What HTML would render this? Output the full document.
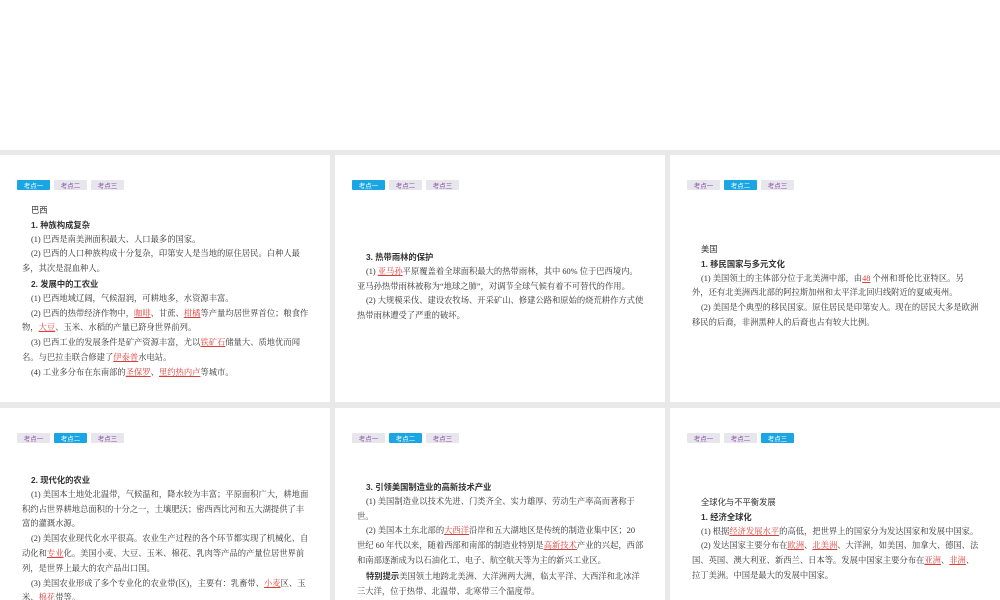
<!DOCTYPE html><html><head><meta charset="utf-8"><style>
body{margin:0;width:1000px;height:600px;background:#e9e9e9;position:relative;overflow:hidden;font-family:"Liberation Serif","Noto Serif CJK SC",serif;color:#333}
.top{position:absolute;left:0;top:0;width:1000px;height:150px;background:#fff}
.p{position:absolute;background:#fff;width:330px;overflow:hidden}
.tabs{position:absolute;top:25px;left:17px;display:flex;gap:4px}
.tabs span{width:33px;height:10px;background:#e6e6ec;color:#8a4fa5;font:6.5px "Noto Sans CJK SC",sans-serif;text-align:center;line-height:10px;border-radius:1px}
.tabs span.a{background:#1aa6e4;color:#fff}
.t{position:absolute;left:22px;width:288px;font-size:8.3px;line-height:14.8px}
.t p{margin:0;text-indent:9px}
.h{font-family:"Liberation Sans","Noto Sans CJK SC",sans-serif;font-weight:bold}
.hh{font-family:"Liberation Sans","Noto Sans CJK SC",sans-serif}
u{color:#d8403a;text-decoration-color:#d8403a}
</style></head><body>
<div class="top"></div>
<div class="p" style="left:0;top:155px;height:247px">
<div class="tabs"><span class="a">考点一</span><span>考点二</span><span>考点三</span></div>
<div class="t" style="top:48px">
<p class="hh">巴西</p><p class="h">1. 种族构成复杂</p>
<p>(1) 巴西是南美洲面积最大、人口最多的国家。</p>
<p>(2) 巴西的人口种族构成十分复杂，印第安人是当地的原住居民。白种人最多，其次是混血种人。</p>
<p class="h">2. 发展中的工农业</p>
<p>(1) 巴西地域辽阔，气候湿润，可耕地多，水资源丰富。</p>
<p>(2) 巴西的热带经济作物中，<u>咖啡</u>、甘蔗、<u>柑橘</u>等产量均居世界首位；粮食作物，<u>大豆</u>、玉米、水稻的产量已跻身世界前列。</p>
<p>(3) 巴西工业的发展条件是矿产资源丰富，尤以<u>铁矿石</u>储量大、质地优而闻名。与巴拉圭联合修建了<u>伊泰普</u>水电站。</p>
<p>(4) 工业多分布在东南部的<u>圣保罗</u>、<u>里约热内卢</u>等城市。</p>
</div></div>
<div class="p" style="left:335px;top:155px;height:247px">
<div class="tabs"><span class="a">考点一</span><span>考点二</span><span>考点三</span></div>
<div class="t" style="top:95px;left:22px">
<p class="h">3. 热带雨林的保护</p>
<p>(1) <u>亚马孙</u>平原覆盖着全球面积最大的热带雨林，其中 60% 位于巴西境内。亚马孙热带雨林被称为“地球之肺”，对调节全球气候有着不可替代的作用。</p>
<p>(2) 大规模采伐、建设农牧场、开采矿山、修建公路和原始的烧荒耕作方式使热带雨林遭受了严重的破坏。</p>
</div></div>
<div class="p" style="left:670px;top:155px;height:247px">
<div class="tabs"><span>考点一</span><span class="a">考点二</span><span>考点三</span></div>
<div class="t" style="top:87px;left:22px">
<p class="hh">美国</p><p class="h">1. 移民国家与多元文化</p>
<p>(1) 美国领土的主体部分位于北美洲中部，由<u>48</u> 个州和哥伦比亚特区。另外，还有北美洲西北部的阿拉斯加州和太平洋北回归线附近的夏威夷州。</p>
<p>(2) 美国是个典型的移民国家。原住居民是印第安人。现在的居民大多是欧洲移民的后裔，非洲黑种人的后裔也占有较大比例。</p>
</div></div>
<div class="p" style="left:0;top:408px;height:192px">
<div class="tabs"><span>考点一</span><span class="a">考点二</span><span>考点三</span></div>
<div class="t" style="top:65px">
<p class="h">2. 现代化的农业</p>
<p>(1) 美国本土地处北温带，气候温和，降水较为丰富；平原面积广大，耕地面积约占世界耕地总面积的十分之一，土壤肥沃；密西西比河和五大湖提供了丰富的灌溉水源。</p>
<p>(2) 美国农业现代化水平很高。农业生产过程的各个环节都实现了机械化、自动化和<u>专业</u>化。美国小麦、大豆、玉米、棉花、乳肉等产品的产量位居世界前列，是世界上最大的农产品出口国。</p>
<p>(3) 美国农业形成了多个专业化的农业带(区)，主要有：乳畜带、<u>小麦</u>区、玉米、<u>棉花</u>带等。</p>
</div></div>
<div class="p" style="left:335px;top:408px;height:192px">
<div class="tabs"><span>考点一</span><span class="a">考点二</span><span>考点三</span></div>
<div class="t" style="top:72px">
<p class="h">3. 引领美国制造业的高新技术产业</p>
<p>(1) 美国制造业以技术先进、门类齐全、实力雄厚、劳动生产率高而著称于世。</p>
<p>(2) 美国本土东北部的<u>大西洋</u>沿岸和五大湖地区是传统的制造业集中区；20 世纪 60 年代以来，随着西部和南部的制造业特别是<u>高新技术</u>产业的兴起，西部和南部逐渐成为以石油化工、电子、航空航天等为主的新兴工业区。</p>
<p><b class="hh">特别提示</b>美国领土地跨北美洲、大洋洲两大洲，临太平洋、大西洋和北冰洋三大洋，位于热带、北温带、北寒带三个温度带。</p>
</div></div>
<div class="p" style="left:670px;top:408px;height:192px">
<div class="tabs"><span>考点一</span><span>考点二</span><span class="a">考点三</span></div>
<div class="t" style="top:87px;left:22px">
<p class="h" style="font-weight:normal">全球化与不平衡发展</p><p class="h">1. 经济全球化</p>
<p>(1) 根据<u>经济发展水平</u>的高低，把世界上的国家分为发达国家和发展中国家。</p>
<p>(2) 发达国家主要分布在<u>欧洲</u>、<u>北美洲</u>、大洋洲，如美国、加拿大、德国、法国、英国、澳大利亚、新西兰、日本等。发展中国家主要分布在<u>亚洲</u>、<u>非洲</u>、拉丁美洲。中国是最大的发展中国家。</p>
</div></div>
</body></html>
